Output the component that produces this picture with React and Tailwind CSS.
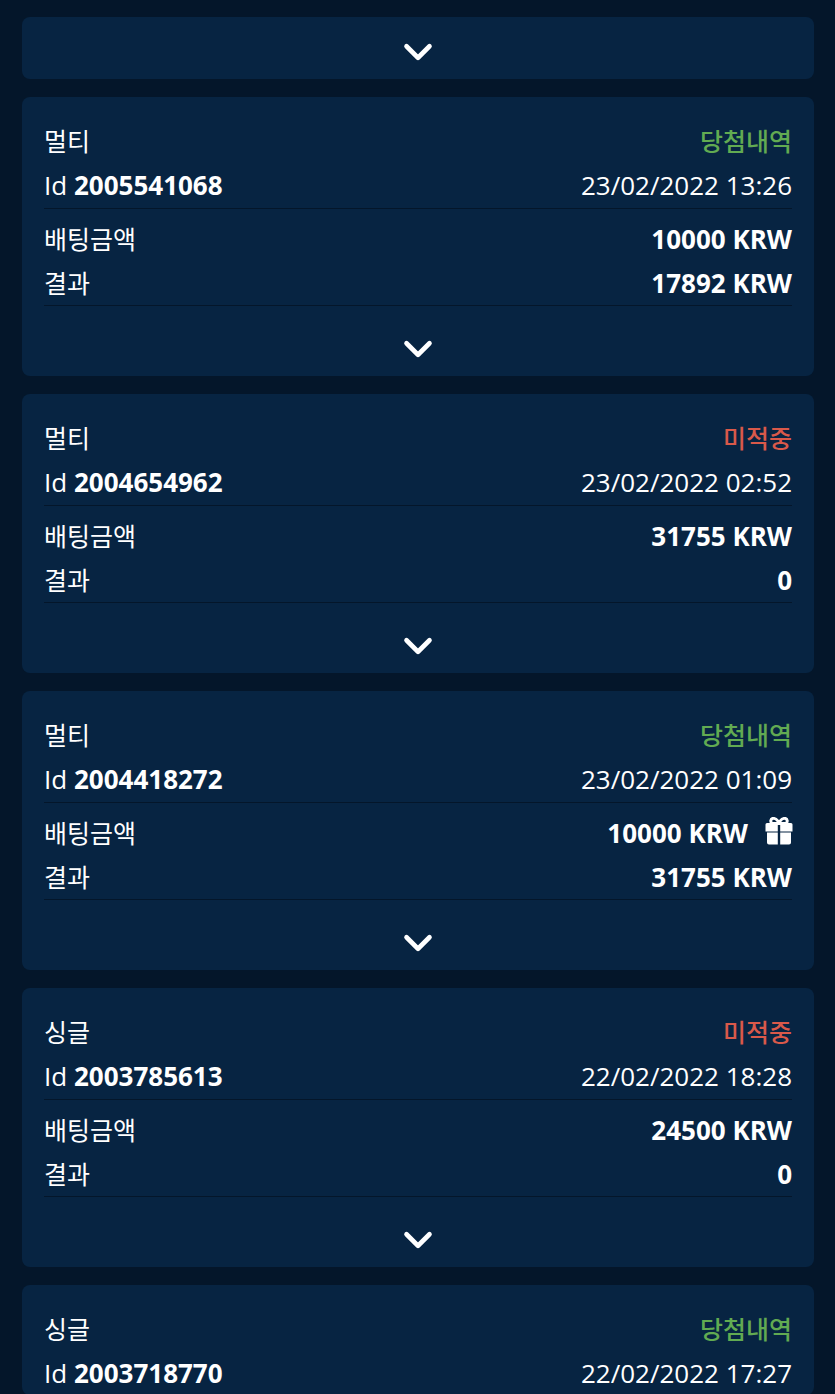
import { ChevronDown } from 'lucide-react'

const bets = [
  { type: "멀티", status: "당첨내역", id: "2005541068", date: "23/02/2022 13:26", stake: "10000 KRW", result: "17892 KRW" },
  { type: "멀티", status: "미적중", id: "2004654962", date: "23/02/2022 02:52", stake: "31755 KRW", result: "0" },
  { type: "멀티", status: "당첨내역", id: "2004418272", date: "23/02/2022 01:09", stake: "10000 KRW", result: "31755 KRW", gift: true },
  { type: "싱글", status: "미적중", id: "2003785613", date: "22/02/2022 18:28", stake: "24500 KRW", result: "0" },
  // last one runs off the bottom of the screen, only the header shows
  { type: "싱글", status: "당첨내역", id: "2003718770", date: "22/02/2022 17:27" },
]

const GiftIcon = () => (
  <svg viewBox="0 0 28 28" className="w-[28px] h-[28px] ml-[17px] -mr-px mb-[5px]" fill="#fff">
    <path d="M0.500 7.500a1.500 1.500 0 0 1 1.500-1.500h10.800v8.500H0.500zM15.200 6H26a1.500 1.500 0 0 1 1.500 1.500v7H15.200zM2 15.500h10.800V27.500H4a2 2 0 0 1-2-2zM15.200 15.500H26v10a2 2 0 0 1-2 2h-8.800z" />
    <path d="M14 6.500C12.500 2.500 9.500 1 7.500 1.500 5.500 2.100 5.200 4.800 6.800 6.500zM14 6.500C15.500 2.500 18.500 1 20.500 1.500c2 .6 2.300 3.300.7 5z" fill="none" stroke="#fff" strokeWidth="3" />
  </svg>
)

const Chevron = ({ className }) => (
  <div className={`flex justify-center items-start ${className}`}>
    <ChevronDown size={46} strokeWidth={2.4} color="#fff" />
  </div>
)

const BetCard = ({ bet }) => (
  <div className="bg-[#072442] rounded-lg px-[22px] pt-[22px] overflow-hidden">
    <div className="flex justify-between items-center h-[44px]">
      <span className="text-[25px]">{bet.type}</span>
      <span className={bet.status === "미적중" ? "text-[25px] font-medium text-[#d9594a]" : "text-[25px] font-medium text-[#62ab52]"}>{bet.status}</span>
    </div>
    <div className="flex justify-between items-center h-[44px]">
      <span>Id <b className="font-bold">{bet.id}</b></span>
      <span>{bet.date}</span>
    </div>
    {bet.stake && (
      <>
        <div className="border-t border-[#04162a] mt-[1px] pt-[8px]">
          <div className="flex justify-between items-center h-[44px]">
            <span className="text-[25px]">배팅금액</span>
            <span className="flex items-center font-bold">{bet.stake}{bet.gift && <GiftIcon />}</span>
          </div>
          <div className="flex justify-between items-center h-[44px]">
            <span className="text-[25px]">결과</span>
            <span className="font-bold">{bet.result}</span>
          </div>
        </div>
        <div className="border-t border-[#04162a]">
          <Chevron className="h-[70px] pt-[20px]" />
        </div>
      </>
    )}
  </div>
)

const App = () => {
  return (
    <div className="h-[1394px] overflow-hidden bg-[#04162a] pl-[22px] pr-[21px] pt-[17px] text-white text-[26px] leading-[44px] font-['Open_Sans','Noto_Sans_CJK_KR',sans-serif]">
      <div className="flex flex-col gap-[18px]">
        <div className="bg-[#072442] rounded-lg">
          <Chevron className="h-[62px] pt-[12px]" />
        </div>
        {bets.map((bet) => (
          <BetCard key={bet.id} bet={bet} />
        ))}
      </div>
    </div>
  )
}

export default App
